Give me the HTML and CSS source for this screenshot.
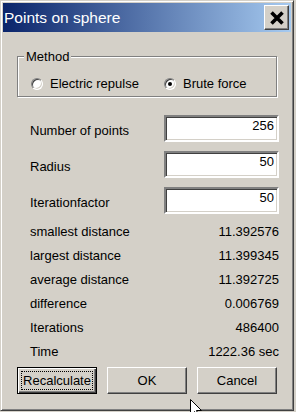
FILE: index.html
```html
<!DOCTYPE html>
<html lang="en">
<head>
  <meta charset="UTF-8">
  <meta name="viewport" content="width=device-width, initial-scale=1.0">
  <title>Points on sphere</title>
  <link rel="stylesheet" href="styles.css">
</head>
<body>
  <div class="window">
    <div class="titlebar">
      <span class="title">Points on sphere</span>
      <button class="close-btn" aria-label="Close">
        <svg width="14" height="14" viewBox="0 0 14 14">
          <path d="M1.5 1.5 L12.5 12.5 M12.5 1.5 L1.5 12.5" stroke="#000" stroke-width="3.6" fill="none"/>
        </svg>
      </button>
    </div>

    <div class="client">
      <div class="group">
        <span class="group-label">Method</span>
        <label class="radio-option"><span class="radio"></span>Electric repulse</label>
        <label class="radio-option"><span class="radio checked"></span>Brute force</label>
      </div>

      <div class="fields">
        <div class="field-row">
          <label class="field-label">Number of points</label>
          <input class="field" type="text" value="256">
        </div>
        <div class="field-row">
          <label class="field-label">Radius</label>
          <input class="field" type="text" value="50">
        </div>
        <div class="field-row">
          <label class="field-label">Iterationfactor</label>
          <input class="field" type="text" value="50">
        </div>
      </div>

      <div class="stats">
        <div class="stat-row"><span>smallest distance</span><span>11.392576</span></div>
        <div class="stat-row"><span>largest distance</span><span>11.399345</span></div>
        <div class="stat-row"><span>average distance</span><span>11.392725</span></div>
        <div class="stat-row"><span>difference</span><span>0.006769</span></div>
        <div class="stat-row"><span>Iterations</span><span>486400</span></div>
        <div class="stat-row"><span>Time</span><span>1222.36 sec</span></div>
      </div>

      <div class="buttons">
        <button class="btn btn-default"><span class="focus-ring">Recalculate</span></button>
        <button class="btn">OK</button>
        <button class="btn">Cancel</button>
      </div>
    </div>
  </div>

  <!-- mouse pointer resting below the OK button -->
  <svg class="cursor" width="12" height="20" viewBox="0 0 12 20">
    <path d="M0.5 0.5 L0.5 16.5 L4.5 12.5 L7 18.5 L9 17.5 L6.5 11.5 L11.5 11.5 Z" fill="#fff" stroke="#000" stroke-width="1"/>
  </svg>
</body>
</html>
```

FILE: styles.css
```css
* {
  margin: 0;
  padding: 0;
  box-sizing: border-box;
}

html, body {
  width: 296px;
  height: 412px;
  overflow: hidden;
}

body {
  position: relative;
  background: #d4d0c8;
  color: #000;
  font-family: "Liberation Sans", Arial, sans-serif;
  font-size: 13px;
}

.window {
  width: 294px;
  height: 411px;
  background: #d4d0c8;
  border: 1px solid;
  border-color: #d4d0c8 #404040 #404040 #d4d0c8;
  box-shadow: inset 1px 1px #fff, inset -1px -1px #808080;
  padding: 2px;
}

.titlebar {
  height: 29px;
  display: flex;
  align-items: flex-start;
  justify-content: space-between;
  background: linear-gradient(to right, #0a246a, #a6caf0);
  color: #fff;
}

.title {
  font-size: 15.5px;
  line-height: 29px;
  padding-left: 1px;
}

.close-btn {
  width: 25px;
  height: 25px;
  margin: 2px 2px 0 0;
  background: #d4d0c8;
  border: 1px solid;
  border-color: #fff #404040 #404040 #fff;
  box-shadow: inset -1px -1px #808080, inset 1px 1px #d4d0c8;
  display: flex;
  align-items: flex-start;
  justify-content: flex-start;
  padding: 5px 0 0 5px;
}

.close-btn svg {
  display: block;
}

.group {
  position: relative;
  margin: 24px 14px 0;
  height: 41px;
  border: 1px solid #808080;
  box-shadow: inset 1px 1px #fff, 1px 1px #fff;
  padding: 14px 0 0 13px;
  display: flex;
}

.group-label {
  position: absolute;
  left: 6px;
  top: -8px;
  padding: 0 2px;
  line-height: 15px;
  background: #d4d0c8;
}

.radio-option {
  display: flex;
  align-items: center;
  gap: 7px;
  line-height: 15px;
}

.radio-option:first-of-type {
  width: 133px;
}

.radio {
  position: relative;
  width: 12px;
  height: 12px;
  border-radius: 50%;
  background: #fff;
  border: 1px solid;
  border-color: #808080 #fff #fff #808080;
  box-shadow: inset 1px 1px #404040, inset -1px -1px #d4d0c8;
}

.radio.checked::after {
  content: "";
  position: absolute;
  left: 3px;
  top: 3px;
  width: 4px;
  height: 4px;
  border-radius: 50%;
  background: #000;
}

.fields {
  margin: 18px 12px 0 27px;
  display: flex;
  flex-direction: column;
  gap: 9px;
}

.field-row {
  display: flex;
  justify-content: space-between;
  align-items: flex-start;
}

.field-label {
  padding-top: 8px;
  line-height: 15px;
}

.field {
  width: 115px;
  height: 27px;
  border: 2px solid;
  border-color: #808080 #fff #fff #808080;
  box-shadow: inset 1px 1px #404040, inset -1px -1px #d4d0c8;
  background: #fff;
  font-family: inherit;
  font-size: 13px;
  line-height: 15px;
  text-align: right;
  padding: 1px 3px 7px;
  color: #000;
  outline: none;
}

.stats {
  margin: 6px 12px 0 27px;
}

.stat-row {
  display: flex;
  justify-content: space-between;
  line-height: 24px;
}

.buttons {
  margin: 3px 14px 0;
  display: flex;
  gap: 10px;
}

.btn {
  width: 80px;
  height: 27px;
  background: #d4d0c8;
  color: #000;
  font-family: inherit;
  font-size: 13px;
  line-height: 25px;
  border: 1px solid;
  border-color: #fff #404040 #404040 #fff;
  box-shadow: inset -1px -1px #808080, inset 1px 1px #d4d0c8;
  display: flex;
  align-items: center;
  justify-content: center;
}

.btn-default {
  border-color: #000;
  box-shadow: inset 1px 1px #fff, inset -1px -1px #404040, inset -2px -2px #808080;
}

.focus-ring {
  border: 1px dotted #000;
  padding: 0 1px;
  line-height: 17px;
}

.cursor {
  position: absolute;
  left: 190px;
  top: 399px;
}
```
